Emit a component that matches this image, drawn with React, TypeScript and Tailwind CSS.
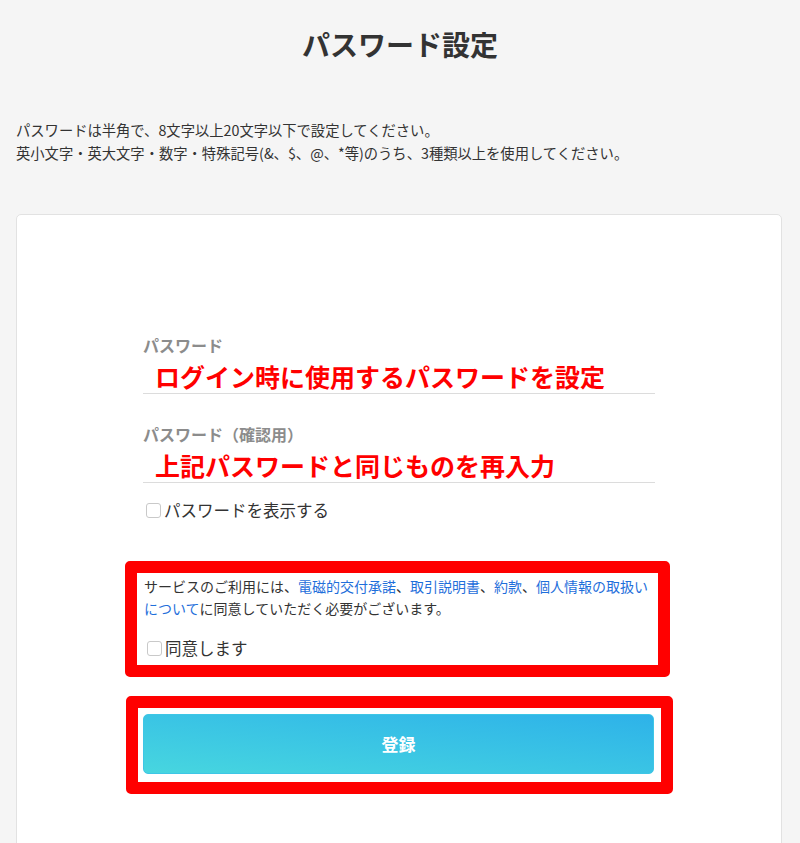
import React from "react"

function Box({ label }: { label: string }) {
  return (
    <label className="flex items-center h-[24px] text-[16.5px] text-[#333]">
      <span className="w-[15px] h-[15px] ml-[3px] mr-[3px] rounded-[3px] border border-[#c9c9c9] bg-white flex-shrink-0" />
      {label}
    </label>
  )
}

function Field({ label, hint }: { label: string; hint: string }) {
  return (
    <div>
      <div className="text-[16px] leading-[24px] font-bold text-[#8c8c8c]">{label}</div>
      <div className="mt-[3px] pb-[1px] border-b border-[#dcdcdc]">
        <div className="pl-[12px] text-[25px] leading-[32px] font-bold text-[#ff0000]">{hint}</div>
      </div>
    </div>
  )
}

export default function App() {
  return (
    <div className="min-h-[843px] bg-[#f5f5f5] text-[#333]" style={{ fontFamily:'"Noto Sans CJK JP", "Noto Sans", sans-serif' }}>
      <h1 className="pt-[24px] text-center text-[28px] leading-[40px] font-bold text-[#333]">パスワード設定</h1>

      <div className="mt-[54px] px-[16px] text-[14.3px] leading-[23px]">
        <p>パスワードは半角で、8文字以上20文字以下で設定してください。</p>
        <p>英小文字・英大文字・数字・特殊記号(&amp;、$、@、*等)のうち、3種類以上を使用してください。</p>
      </div>

      <div className="mt-[50px] mx-[16px] mr-[18px] bg-white border border-[#e2e2e2] rounded-[5px] pt-[118px] pb-[80px]">
        <div className="w-[512px] mx-auto">
          <Field label="パスワード" hint="ログイン時に使用するパスワードを設定" />
          <div className="mt-[28px]">
            <Field label="パスワード（確認用）" hint="上記パスワードと同じものを再入力" />
          </div>
          <div className="mt-[15px]">
            <Box label="パスワードを表示する" />
          </div>

          <div className="mt-[39px] ml-[-18px] mr-[-15px] border-[12px] border-[#ff0000] rounded-[5px] pl-[7px] pr-[4px] pt-[2px] pb-[5px]">
            <p className="text-[14px] leading-[22px] text-[#333]">
              サービスのご利用には、<span className="text-[#1f6fdb]">電磁的交付承諾</span>、<span className="text-[#1f6fdb]">取引説明書</span>、<span className="text-[#1f6fdb]">約款</span>、<span className="text-[#1f6fdb]">個人情報の取扱い</span>
              <br />
              <span className="text-[#1f6fdb]">について</span>に同意していただく必要がございます。
            </p>
            <div className="mt-[17px]">
              <Box label="同意します" />
            </div>
          </div>

          <div className="mt-[19px] ml-[-17px] mr-[-18px] border-[12px] border-[#ff0000] rounded-[5px] pl-[5px] pr-[7px] pt-[6px] pb-[8px]">
            <button className="w-full h-[60px] rounded-[5px] border border-[#3ec6e6] bg-linear-to-tr from-[#47d6df] to-[#2eb2e9] text-white text-[17px] font-bold">
              登録
            </button>
          </div>
        </div>
      </div>
    </div>
  )
}
